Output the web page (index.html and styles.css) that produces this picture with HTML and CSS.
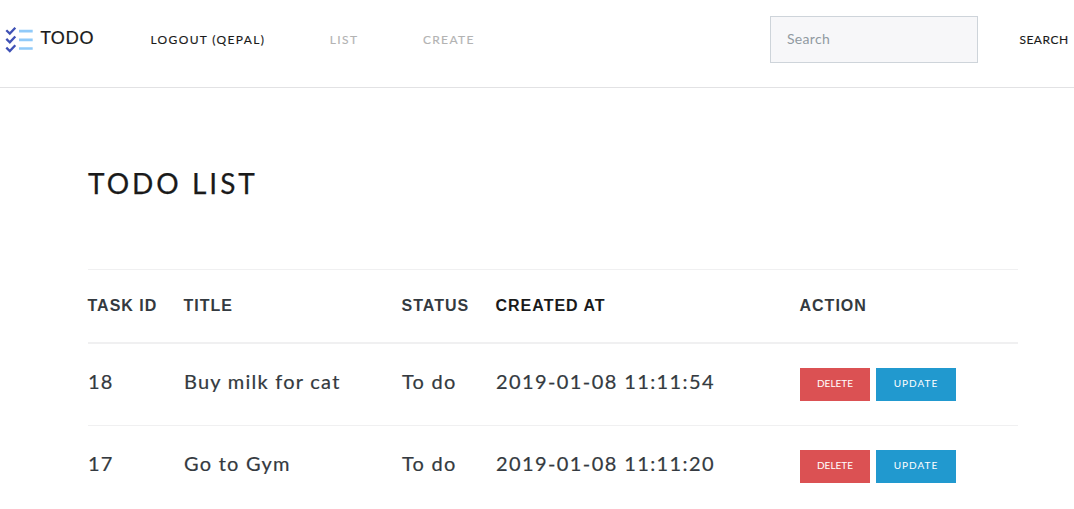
FILE: index.html
```html
<!DOCTYPE html>
<html lang="en">
<head>
<meta charset="utf-8">
<title>Todo</title>
<link rel="stylesheet" href="styles.css">
</head>
<body>
<nav class="navbar">
  <a class="brand">
    <svg class="brand-icon" width="28" height="28" viewBox="0 0 28 28" fill="none">
      <g stroke="#90caf9" stroke-width="2.7"><path d="M14 5.2h13.7M14 13.9h13.7M14 22.5h13.7"/></g>
      <g stroke="#3f51b5" stroke-width="2.3"><path d="M1.3 4.2l3.5 3.4 5.5-5.8M1.3 12.9l3.5 3.4 5.5-5.8M1.3 21.6l3.5 3.4 5.5-5.8"/></g>
    </svg>
    <span class="brand-name">TODO</span>
  </a>
  <div class="links">
    <a class="link active">LOGOUT (QEPAL)</a>
    <a class="link">LIST</a>
    <a class="link">CREATE</a>
  </div>
  <form class="search">
    <input class="search-input" type="text" placeholder="Search">
    <button class="search-button" type="button">SEARCH</button>
  </form>
</nav>
<main class="container">
  <h1 class="title">TODO LIST</h1>
  <table class="tasks">
    <colgroup><col class="c-id"><col class="c-title"><col class="c-status"><col class="c-date"><col class="c-action"></colgroup>
    <thead>
      <tr><th>TASK ID</th><th>TITLE</th><th>STATUS</th><th class="sorted">CREATED AT</th><th>ACTION</th></tr>
    </thead>
    <tbody>
      <tr><td>18</td><td>Buy milk for cat</td><td>To do</td><td class="date">2019-01-08 11:11:54</td>
        <td><div class="actions"><button class="btn delete">DELETE</button><a class="btn update">UPDATE</a></div></td></tr>
      <tr><td>17</td><td>Go to Gym</td><td>To do</td><td class="date">2019-01-08 11:11:20</td>
        <td><div class="actions"><button class="btn delete">DELETE</button><a class="btn update">UPDATE</a></div></td></tr>
    </tbody>
  </table>
</main>
</body>
</html>
```

FILE: styles.css
```css
* { box-sizing: border-box; }
body { margin: 0; background: #fff; color: #1a1a1a; font-family: Lato, sans-serif; overflow: hidden; }
.navbar { display: flex; align-items: center; height: 88px; padding: 0 5px 9px; border-bottom: 1px solid #e2e2e4; }
.brand { display: flex; align-items: center; width: 145.5px; gap: 7.5px; }
.brand-icon { margin-top: 1px; }
.brand-name { font-size: 17.5px; letter-spacing: .6px; line-height: 24px; margin-top: -2px; -webkit-text-stroke: .2px; }
.links { display: flex; }
.link { font-size: 12px; letter-spacing: 1.35px; color: #b3b3b3; margin-right: 64.5px; white-space: nowrap; -webkit-text-stroke: .15px; }
.link.active { color: #1a1a1a; }
.search { display: flex; align-items: center; margin-left: auto; }
.search-input { width: 208px; height: 47px; padding: 0 16px 2px; border: 1px solid #ced4da; background: #f7f7f9; font: 14px Lato, sans-serif; letter-spacing: .3px; border-radius: 0; }
.search-input::placeholder { color: #919aa1; }
.search-button { width: 50px; margin: 2px 0 0 41px; padding: 0; border: 0; background: none; color: #1a1a1a; font: 12px/18px Lato, sans-serif; letter-spacing: .5px; white-space: nowrap; -webkit-text-stroke: .15px; }
.container { width: 930px; margin-left: 88px; }
.title { margin: 75px 0 66px; font-size: 28px; line-height: 40px; font-weight: 400; letter-spacing: 3px; -webkit-text-stroke: .25px; }
.tasks { width: 930px; table-layout: fixed; border-collapse: separate; border-spacing: 0; color: #343a40; }
.c-id { width: 96px; }
.c-title { width: 218px; }
.c-status { width: 94px; }
.c-date { width: 304px; }
.c-action { width: 218px; }
th { height: 75px; padding: 0; border-top: 1px solid #f0f0f1; border-bottom: 2px solid #f0f0f1; font: 700 16px/24px "Liberation Sans", Arial, sans-serif; letter-spacing: 1px; text-align: left; text-indent: -.5px; }
th.sorted { color: #1a1a1a; }
td { height: 82px; padding: 0 0 8px; border-bottom: 1px solid #f0f0f1; font-size: 20px; letter-spacing: 1.25px; white-space: nowrap; -webkit-text-stroke: .2px; }
td.date { letter-spacing: 1.4px; }
td:last-child { padding: 0; }
tbody tr:last-child td { border-bottom-color: transparent; }
.actions { display: flex; gap: 6px; }
.btn { display: flex; align-items: center; justify-content: center; height: 33px; padding: 0 0 3px; border: 0; color: #fff; font: 10px/12px Lato, sans-serif; -webkit-text-stroke: 0; }
.delete { width: 70px; background: #db5153; }
.update { width: 80px; background: #2199cf; letter-spacing: 1px; }
```
